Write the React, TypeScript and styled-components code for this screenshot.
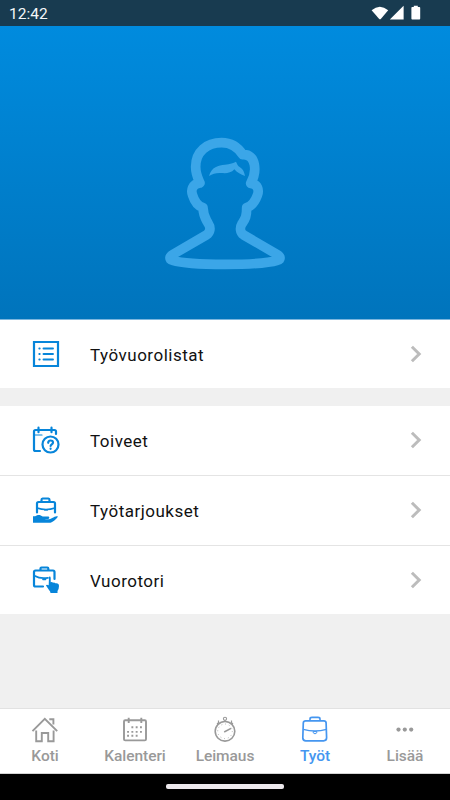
import React from "react";
import styled, { createGlobalStyle } from "styled-components";

const Global = createGlobalStyle`
  * { box-sizing: border-box; }
  body { margin: 0; font-family: Roboto, sans-serif; background: #f0f0f0; }
  svg { display: block; flex: none; }
`;

const Screen = styled.div`
  width: 450px;
  height: 800px;
  display: flex;
  flex-direction: column;
  background: #f0f0f0;
  overflow: hidden;
`;

const StatusBar = styled.header`
  height: 26px;
  flex: none;
  display: flex;
  align-items: center;
  justify-content: space-between;
  padding: 2px 29px 0 9px;
  background: #183b50;
  color: #f4f7f9;
  font-size: 15.5px;
  line-height: 24px;
`;

const Hero = styled.section`
  height: 294px;
  flex: none;
  display: flex;
  justify-content: center;
  padding-top: 104px;
  background: linear-gradient(#008bde, #0074bc);
  border-bottom: 1px solid #7cb6de;
`;

const Group = styled.nav<{ $gap?: boolean }>`
  flex: none;
  margin-top: ${(p) => (p.$gap ? 18 : 0)}px;
  background: #fff;
`;

const Row = styled.a<{ $line?: boolean }>`
  height: ${(p) => (p.$line ? 70 : 68)}px;
  display: flex;
  align-items: center;
  padding: 0 28px ${(p) => (p.$line ? 1 : 0)}px 32px;
  border-bottom: ${(p) => (p.$line ? "1px solid #e4e4e4" : "none")};
  color: #111;
`;

const RowLabel = styled.span`
  flex: 1;
  margin-left: 30px;
  padding-top: 1px;
  font-size: 17px;
  letter-spacing: 0.5px;
  line-height: 24px;
`;

const TabBar = styled.nav`
  height: 66px;
  flex: none;
  margin-top: auto;
  display: grid;
  grid-template-columns: repeat(5, 1fr);
  background: #fff;
  border-top: 1px solid #e2e2e2;
  border-bottom: 1px solid #d4d4d4;
`;

const Tab = styled.a<{ $active?: boolean }>`
  display: flex;
  flex-direction: column;
  align-items: center;
  padding-top: 6px;
  color: ${(p) => (p.$active ? "#4596f0" : "#999")};
  font-size: 15.5px;
  font-weight: 500;
  line-height: 20px;
  letter-spacing: -0.05px;
`;

const TabLabel = styled.span`
  margin-top: 1px;
`;

const SystemBar = styled.footer`
  height: 26px;
  flex: none;
  display: flex;
  justify-content: center;
  padding-top: 10px;
  background: #000;
`;

const Handle = styled.div`
  width: 118px;
  height: 5px;
  border-radius: 2px;
  background: #ece8ec;
`;

const StatusIcons = () => (
  <svg width="50" height="18" viewBox="0 0 50 18" fill="#fff">
    <path d="M.6 5.2Q8.8-1.8 17.2 5.2L10 13.8Q9 14.9 8 13.8Z" />
    <path d="M32.6 .8V14.6H18.8Z" />
    <path d="M42.8 .8h4V2h1.6q.8 0 .8.8v10.8q0 1-.8 1h-7.2q-.8 0-.8-1V2.8q0-.8.8-.8h1.6Z" />
  </svg>
);

const Avatar = () => (
  <svg width="140" height="150" viewBox="0 0 420 450">
    <path
      d="M200 38C155 38 122 65 122 110C122 132 129 145 135 159C111 162 107 181 113 196C119 216 129 228 144 233C145 260 151 264 160 281C168 293 166 307 154 315L54 373C42 380 42 388 53 391C85 401 140 403 210 403C280 403 335 401 367 391C378 388 378 380 366 373L266 315C255 308 254 293 261 281C270 267 275 262 275 233C290 228 300 215 307 196C313 181 309 162 287 160C299 139 302 125 298 104C294 83 282 72 263 74C249 52 229 38 200 38Z"
      fill="none"
      stroke="#3ba6e8"
      strokeWidth="29"
      strokeLinejoin="round"
    />
    <path
      d="M162 138C170 110 190 106 210 104C225 102 236 99 243 95C247 102 248 108 255 112C265 118 268 128 270 138C258 134 246 128 238 118C228 130 213 130 199 129C183 128 174 131 162 138Z"
      fill="#3ba6e8"
    />
  </svg>
);

const Chevron = () => (
  <svg width="12" height="18" viewBox="0 0 12 18" fill="none" stroke="#bcbcbc" strokeWidth="3">
    <path d="M1.9 1.7 9.2 9 1.9 16.3" />
  </svg>
);

const RowSvg = styled.svg.attrs({ width: 28, height: 28, viewBox: "0 0 28 28" })`
  fill: none;
  stroke: #0785da;
  stroke-width: 2.2;
  stroke-linecap: round;
  stroke-linejoin: round;
`;

const ListIcon = () => (
  <RowSvg>
    <path d="M2 2h24v24H2Z" strokeLinejoin="miter" />
    <path d="M11.5 8.5h9.5M11.5 14h9.5M11.5 19.5h9.5M7.3 8.5h.4M7.3 14h.4M7.3 19.5h.4" strokeWidth="1.9" />
  </RowSvg>
);

const WishIcon = () => (
  <RowSvg>
    <path d="M8 25H3.5Q2 25 2 23.5V5.5Q2 4 3.5 4H22.5Q24 4 24 5.5V8M6.5 1.7v4.5M19.5 1.7v4.5" />
    <path d="M3 9h9" strokeWidth="1.2" strokeDasharray="7 2 2" />
    <circle cx="18.5" cy="18.5" r="8" />
    <path d="M16.2 16.8c0-3 4.8-3 4.8-.3 0 1.8-2.4 1.8-2.4 3.5M18.6 22.7v.1" />
  </RowSvg>
);

const OfferIcon = () => (
  <RowSvg>
    <path d="M5 16.5V7.5Q5 6 6.5 6H21.5Q23 6 23 7.5V16.5M9.5 5.5V4Q9.5 2.5 10.5 2.5h6Q17.5 2.5 17.5 4v1.5" />
    <path d="M5 12Q14 15 23 12M12.7 14h2.6" strokeWidth="1.7" />
    <path
      d="M1 20.2h2.2c3-2 5.2-1.4 7.5.3h5c2.2 0 2.2 2.3 0 2.6H12.5c3.5.5 6 .2 7.7-1 2-1.4 4-2.3 5.7-1.7-1.8 3.2-5.4 6-8.7 6.4H1Z"
      fill="#0785da"
      stroke="none"
    />
  </RowSvg>
);

const MarketIcon = () => (
  <RowSvg>
    <path d="M11 20.5H3.5Q2 20.5 2 19V6Q2 4.5 3.5 4.5H21Q22.5 4.5 22.5 6v7M8.5 4V2.5Q8.5 1.5 9.5 1.5h5.8q1 0 1 1V4" />
    <path d="M3 10q5 3 13 1.8M11 13.3h2.5" strokeWidth="1.7" />
    <path
      d="M17 10.7q1.6-.7 1.7 1.2v4.3q1.6-.3 2.4.5 1.5-.4 2.2.6 3.7-.5 3.7 2.6-.1 3.5-1.5 5v2h-7q0-1.3-1.5-2.8l-3-4.5q.3-1.7 2.7-.4Z"
      fill="#0785da"
      stroke="none"
    />
  </RowSvg>
);

const TabSvg = styled.svg.attrs({ width: 30, height: 30, viewBox: "0 0 30 30" })`
  fill: none;
  stroke: currentColor;
  stroke-width: 1.9;
  stroke-linecap: butt;
  stroke-linejoin: round;
`;

const HomeIcon = () => (
  <TabSvg>
    <path d="M2.5 16.2 14.8 3.8 27.2 16.2M6.2 15.5V26.2h5.6V18h6.4v8.2h5.4V15.5M19.3 4.3h4.1v5.2" strokeLinejoin="miter" />
  </TabSvg>
);

const CalendarIcon = () => (
  <TabSvg>
    <rect x="4" y="5.2" width="22" height="20.2" rx="1.2" />
    <path d="M8.7 2.7v5.2M21.3 2.7v5.2" />
    <path d="M11.4 12.2h11.2M7.1 16.9h15.5M7.1 20.8h11.2" strokeDasharray="1.9 2.4" />
  </TabSvg>
);

const StopwatchIcon = () => (
  <TabSvg>
    <circle cx="15" cy="16.3" r="9.8" strokeWidth="1.6" />
    <circle cx="15" cy="3.8" r="1.6" strokeWidth="1.1" />
    <path d="M15 5.2v1.5M8.5 5.5v2.2L7 9M21.5 5.5v2.2L23 9" strokeWidth="1.2" />
    <circle cx="15" cy="16.3" r="7.3" strokeWidth=".9" strokeDasharray=".8 3.02" />
    <path d="M14.2 17 21 13.3" strokeWidth="1.5" />
  </TabSvg>
);

const CaseIcon = () => (
  <TabSvg>
    <path d="M5.7 5.8h18.2q2 0 2.2 2l.5 15q0 3-3 3H5.8q-3 0-3-3L3.3 7.8q.2-2 2.4-2Z" strokeWidth="1.7" />
    <path d="M10 5.3V4Q10 2.4 12 2.4h6q2 0 2 1.6V5.3" strokeWidth="1.6" />
    <path d="M3.3 14.4Q15 17.6 26.5 14.4" strokeWidth="1.4" />
    <path d="M13.2 16.6h3.6v1.2q-1.8 2.2-3.6 0Z" strokeWidth="1" />
  </TabSvg>
);

const MoreIcon = () => (
  <TabSvg>
    <g fill="currentColor" stroke="none">
      <circle cx="8.5" cy="14.6" r="2.1" />
      <circle cx="14.8" cy="14.6" r="2.1" />
      <circle cx="21.2" cy="14.6" r="2.1" />
    </g>
  </TabSvg>
);

type Item = { label: string; Icon: React.FC };

const requests: Item[] = [
  { label: "Toiveet", Icon: WishIcon },
  { label: "Työtarjoukset", Icon: OfferIcon },
  { label: "Vuorotori", Icon: MarketIcon },
];

const tabs: Item[] = [
  { label: "Koti", Icon: HomeIcon },
  { label: "Kalenteri", Icon: CalendarIcon },
  { label: "Leimaus", Icon: StopwatchIcon },
  { label: "Työt", Icon: CaseIcon },
  { label: "Lisää", Icon: MoreIcon },
];

const MenuRow = ({ label, Icon, line }: Item & { line?: boolean }) => (
  <Row $line={line}>
    <Icon />
    <RowLabel>{label}</RowLabel>
    <Chevron />
  </Row>
);

export default function App() {
  return (
    <>
      <Global />
      <Screen>
        <StatusBar>
          <span>12:42</span>
          <StatusIcons />
        </StatusBar>
        <Hero>
          <Avatar />
        </Hero>
        <Group>
          <MenuRow label="Työvuorolistat" Icon={ListIcon} />
        </Group>
        <Group $gap>
          {requests.map((item, i) => (
            <MenuRow key={item.label} {...item} line={i < requests.length - 1} />
          ))}
        </Group>
        <TabBar>
          {tabs.map(({ label, Icon }) => (
            <Tab key={label} $active={label === "Työt"}>
              <Icon />
              <TabLabel>{label}</TabLabel>
            </Tab>
          ))}
        </TabBar>
        <SystemBar>
          <Handle />
        </SystemBar>
      </Screen>
    </>
  );
}
